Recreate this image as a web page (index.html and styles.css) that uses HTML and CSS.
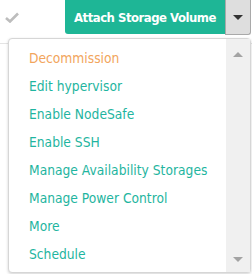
FILE: index.html
```html
<!DOCTYPE html>
<html>
<head>
<meta charset="utf-8">
<link rel="stylesheet" href="styles.css">
</head>
<body>
<div class="toolbar">
  <span class="check">
    <svg width="14" height="11" viewBox="0 0 14 11"><path d="M1 6 L5 9.5 L13 1.5" fill="none" stroke="#bdbdbd" stroke-width="2.6"/></svg>
  </span>
  <div class="btn-group">
    <button class="btn-main">Attach Storage Volume</button>
    <button class="btn-caret"><span class="caret"></span></button>
  </div>
</div>
<div class="under-line"></div>
<div class="menu">
  <ul class="items">
    <li class="warn">Decommission</li>
    <li>Edit hypervisor</li>
    <li>Enable NodeSafe</li>
    <li>Enable SSH</li>
    <li>Manage Availability Storages</li>
    <li>Manage Power Control</li>
    <li>More</li>
    <li>Schedule</li>
  </ul>
  <div class="scrollbar">
    <span class="arrow-up"></span>
    <span class="arrow-down"></span>
  </div>
</div>
</body>
</html>
```
FILE: styles.css
```css
html, body {
  margin: 0;
  padding: 0;
  background: #fff;
  font-family: "DejaVu Sans Condensed", "DejaVu Sans", sans-serif;
}
body {
  position: relative;
  width: 252px;
  height: 274px;
  overflow: hidden;
}
.toolbar {
  display: flex;
  align-items: flex-start;
  justify-content: space-between;
  height: 35px;
  padding-right: 1px;
}
.check {
  display: flex;
  padding: 12px 0 0 5px;
}
.btn-group {
  display: flex;
}
.btn-main {
  width: 160px;
  height: 34px;
  margin: 0;
  padding: 0;
  border: none;
  border-radius: 0 0 0 3px;
  background: #1eb696;
  color: #fff;
  font-family: inherit;
  font-size: 13px;
  font-weight: bold;
  letter-spacing: -0.5px;
  white-space: nowrap;
  cursor: pointer;
}
.btn-caret {
  width: 26px;
  height: 35px;
  margin: 0;
  padding: 0;
  border: 1px solid #a9a9a9;
  border-top: none;
  border-radius: 0 0 3px 0;
  background: #dedede;
  display: flex;
  align-items: center;
  justify-content: center;
}
.caret {
  width: 0;
  height: 0;
  border-left: 5px solid transparent;
  border-right: 5px solid transparent;
  border-top: 5px solid #333;
}
.under-line {
  margin-top: 8px;
  height: 1px;
  background: #e4e4e4;
}
.menu {
  position: absolute;
  left: 8px;
  top: 38px;
  width: 241px;
  height: 233px;
  border: 1px solid #d6d6d6;
  border-radius: 4px;
  background: #fff;
  box-shadow: 0 1px 3px rgba(0,0,0,0.18);
  display: flex;
}
.items {
  flex: 1;
  list-style: none;
  margin: 0;
  padding: 5px 0 0 20px;
}
.items li {
  height: 28px;
  line-height: 28px;
  font-size: 13.7px;
  color: #1fb5a0;
  white-space: nowrap;
}
.items li.warn {
  color: #f2a55c;
}
.scrollbar {
  width: 24px;
  background: #f0f0f0;
  display: flex;
  flex-direction: column;
  justify-content: space-between;
  align-items: center;
  padding: 13px 0 10px;
}
.arrow-up {
  width: 0;
  height: 0;
  border-left: 5.5px solid transparent;
  border-right: 5.5px solid transparent;
  border-bottom: 5px solid #a3a3a3;
}
.arrow-down {
  width: 0;
  height: 0;
  border-left: 5.5px solid transparent;
  border-right: 5.5px solid transparent;
  border-top: 5px solid #a3a3a3;
}
```
